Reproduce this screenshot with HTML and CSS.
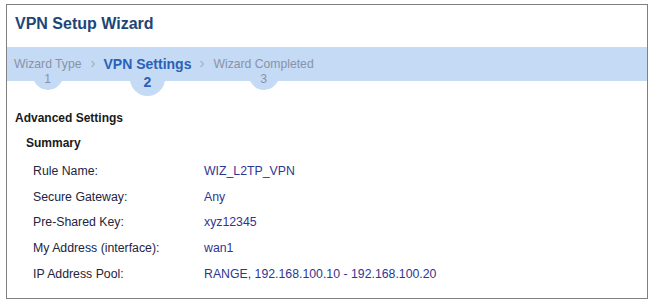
FILE: index.html
```html
<!DOCTYPE html>
<html lang="en">
<head>
    <meta charset="UTF-8">
    <meta name="viewport" content="width=device-width, initial-scale=1.0">
    <title>VPN Setup Wizard</title>
    <link rel="stylesheet" href="styles.css">
</head>
<body>
    <div id="wizard">
        <h1 class="title">VPN Setup Wizard</h1>

        <div class="steps">
            <div class="step">
                <span class="step-label">Wizard Type</span>
                <span class="step-num">1</span>
            </div>
            <svg class="sep" width="6" height="8" viewBox="0 0 6 8"><polyline points="1.5,1 4.5,4 1.5,7" fill="none" stroke="#a6b2c4" stroke-width="1.2"/></svg>
            <div class="step active">
                <span class="step-label">VPN Settings</span>
                <span class="step-num">2</span>
            </div>
            <svg class="sep" width="6" height="8" viewBox="0 0 6 8"><polyline points="1.5,1 4.5,4 1.5,7" fill="none" stroke="#a6b2c4" stroke-width="1.2"/></svg>
            <div class="step">
                <span class="step-label">Wizard Completed</span>
                <span class="step-num">3</span>
            </div>
        </div>

        <div class="content">
            <h2>Advanced Settings</h2>
            <h3>Summary</h3>
            <div class="summary">
                <span class="label">Rule Name:</span>
                <span class="value">WIZ_L2TP_VPN</span>
                <span class="label">Secure Gateway:</span>
                <span class="value">Any</span>
                <span class="label">Pre-Shared Key:</span>
                <span class="value">xyz12345</span>
                <span class="label">My Address (interface):</span>
                <span class="value">wan1</span>
                <span class="label">IP Address Pool:</span>
                <span class="value">RANGE, 192.168.100.10 - 192.168.100.20</span>
            </div>
        </div>
    </div>
</body>
</html>
```

FILE: styles.css
```css
body {
    font-family: "Liberation Sans", Arial, sans-serif;
    margin: 0;
    padding: 0;
    background-color: #fff;
}

#wizard {
    box-sizing: border-box;
    width: 642px;
    height: 295px;
    margin: 4px 0 0 6px;
    border: 1px solid #808080;
}

.title {
    margin: 0;
    padding: 9px 8px 0;
    height: 35px;
    box-sizing: border-box;
    font-size: 16px;
    line-height: 20px;
    font-weight: bold;
    color: #1d4676;
}

.steps {
    position: relative;
    z-index: 0;
    display: flex;
    align-items: flex-start;
    height: 34px;
    margin-top: 7px;
    padding: 10px 0 0 7px;
    box-sizing: border-box;
    background-color: #c5daf5;
}

.step {
    display: flex;
    flex-direction: column;
    align-items: center;
    font-size: 12.2px;
    color: #8893a7;
}

.step-label {
    line-height: 14px;
}

.step-num {
    position: relative;
    margin-top: 1px;
    line-height: 14px;
}

.step-num::before {
    content: "";
    position: absolute;
    z-index: -1;
    top: -12px;
    left: 50%;
    width: 30px;
    height: 30px;
    margin-left: -15px;
    border-radius: 50%;
    background-color: #c5daf5;
}

.step.active {
    font-size: 14px;
    font-weight: bold;
    color: #2b61b6;
}

.step.active .step-num {
    margin-top: 4px;
}

.step.active .step-num::before {
    top: -14px;
    width: 35px;
    height: 35px;
    margin-left: -17.5px;
}

.sep {
    margin: 3px 8px 0;
}

.content {
    padding: 30px 8px 0;
}

h2 {
    margin: 0;
    font-size: 12px;
    line-height: 14px;
    font-weight: bold;
    color: #1a1a1a;
}

h3 {
    margin: 11px 0 0 11px;
    font-size: 12px;
    line-height: 14px;
    font-weight: bold;
    color: #1a1a1a;
}

.summary {
    display: grid;
    grid-template-columns: 171px 1fr;
    margin: 9px 0 0 18px;
    font-size: 12.3px;
    line-height: 25.7px;
}

.summary .label {
    color: #25243d;
}

.summary .value {
    color: #2f3593;
}
```
